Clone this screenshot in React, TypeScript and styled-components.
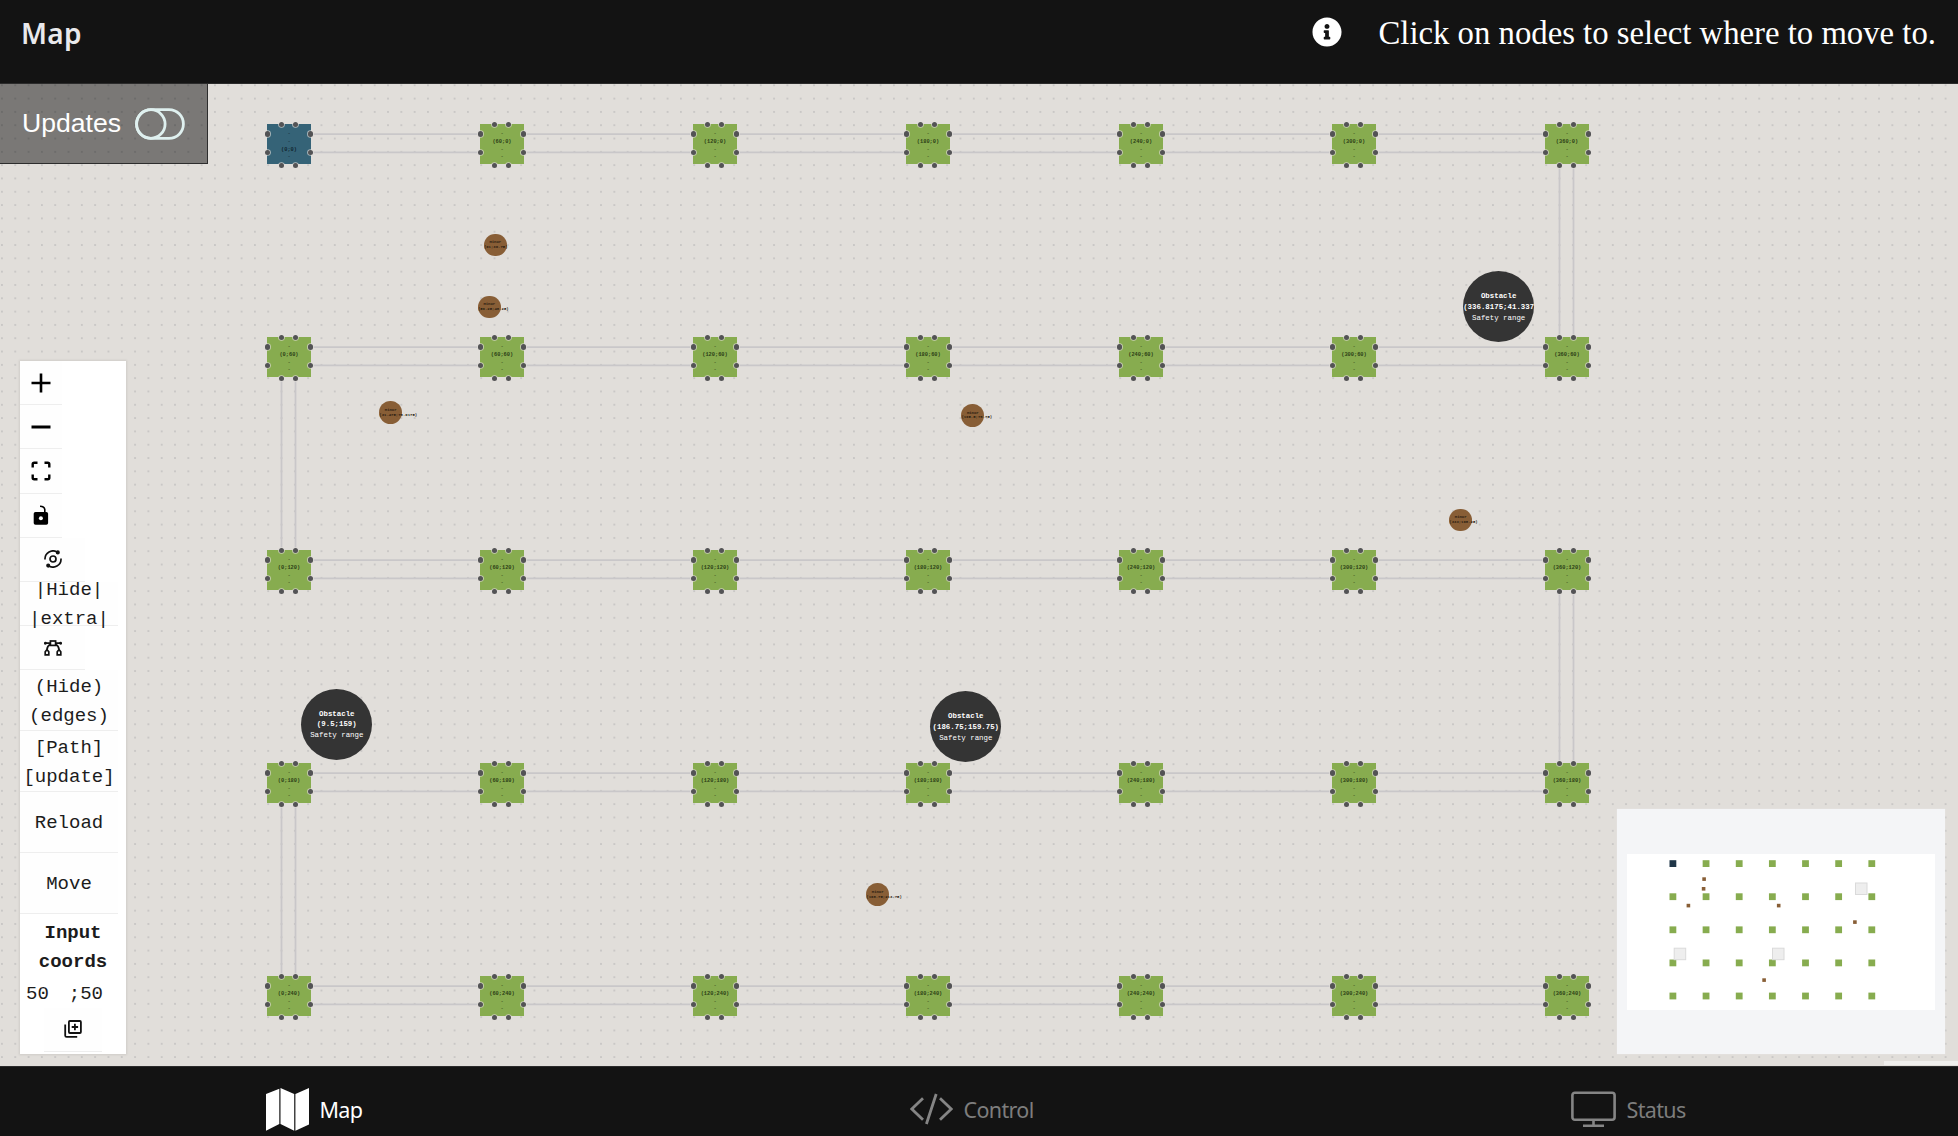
import React from "react";
import styled, { createGlobalStyle } from "styled-components";
import { FaInfoCircle } from "react-icons/fa";

const mono = `"Liberation Mono", monospace`;

const Global = createGlobalStyle`
  *, *::before, *::after { box-sizing: border-box; }
  body { margin: 0; background: #131313; overflow: hidden; }
`;

const Page = styled.div`
  display: flex;
  flex-direction: column;
  width: 100%;
  height: 1136px;
`;

const Header = styled.header`
  display: flex;
  flex: 0 0 84px;
  justify-content: space-between;
  align-items: flex-start;
  padding: 0 22px 0 21px;
  background: #131313;
  border-bottom: 1px solid #2b2b2b;
`;

const Title = styled.h1`
  margin: 13px 0 0;
  font: 600 28px/40px "Noto Sans", sans-serif;
  letter-spacing: 0.3px;
  color: #e9e9ec;
`;

const Hint = styled.div`
  display: flex;
  align-items: center;
  gap: 36px;
  margin-top: 12px;
  font: 32.75px/38px "Liberation Serif", serif;
  color: #fff;
  svg { display: block; }
  span { padding-top: 2px; }
`;

const Canvas = styled.main`
  position: relative;
  display: flex;
  justify-content: space-between;
  align-items: flex-end;
  flex: 1;
  min-height: 0;
  padding: 0 13px 12px 20px;
  overflow: hidden;
  background-color: #e1deda;
`;

const Layer = styled.svg`
  position: absolute;
  inset: 0;
  width: 100%;
  height: 100%;
`;

const Updates = styled.div`
  position: absolute;
  top: 0;
  left: 0;
  display: flex;
  align-items: center;
  gap: 14px;
  width: 208px;
  height: 80px;
  padding-left: 22px;
  font: 26.6px/30px "Liberation Sans", Arial, sans-serif;
  color: #fff;
  background: rgba(0, 0, 0, 0.46);
  border: solid #2d2d2d;
  border-width: 0 1px 1px 0;
  span { padding-bottom: 2px; }
`;

const Node = styled.div<{ $x: number; $y: number; $active: boolean }>`
  position: absolute;
  left: ${(p) => p.$x}px;
  top: ${(p) => p.$y}px;
  display: flex;
  flex-direction: column;
  align-items: center;
  width: 43.2px;
  height: 40px;
  padding-top: 7px;
  background: ${(p) => (p.$active ? "#356377" : "#87ac4f")};
  font: 5.3px/7.7px ${mono};
  color: ${(p) => (p.$active ? "#10262f" : "#2c4016")};
`;

const NodeName = styled.b`
  white-space: nowrap;
`;

const Handle = styled.i<{ $x: number; $y: number }>`
  position: absolute;
  left: ${(p) => p.$x - 2.6}px;
  top: ${(p) => p.$y - 2.6}px;
  width: 5.2px;
  height: 5.2px;
  border-radius: 50%;
  background: #535355;
  box-shadow: 0 0 0 0.8px rgba(225, 222, 218, 0.75);
`;

const Obstacle = styled.div<{ $x: number; $y: number }>`
  position: absolute;
  left: ${(p) => p.$x - 35.5}px;
  top: ${(p) => p.$y - 35.5}px;
  display: flex;
  flex-direction: column;
  justify-content: center;
  align-items: flex-start;
  width: 71px;
  height: 71px;
  padding-top: 1px;
  border-radius: 50%;
  overflow: hidden;
  background: #343434;
  color: #fff;
  font: 7.4px/10.7px ${mono};
  white-space: nowrap;
  > * { min-width: 71px; text-align: center; }
`;

const Rock = styled.div<{ $x: number; $y: number }>`
  position: absolute;
  left: ${(p) => p.$x - 11.4}px;
  top: ${(p) => p.$y - 11.4}px;
  display: flex;
  flex-direction: column;
  justify-content: center;
  width: 22.8px;
  height: 22.8px;
  border-radius: 50%;
  background: #885e36;
  color: #2a1c10;
  font: bold 3.95px/4.5px ${mono};
  white-space: nowrap;
  > :first-child { text-align: center; }
`;

const Controls = styled.aside`
  position: relative;
  display: flex;
  flex-direction: column;
  width: 106px;
  height: 693px;
  background: #fff;
  box-shadow: 0 0 2px 1px rgba(0, 0, 0, 0.08);
  font: 19px/29px ${mono};
  color: #1c1c1c;
`;

const Control = styled.button<{ $w?: number; $h?: number }>`
  display: flex;
  flex: none;
  justify-content: center;
  align-items: center;
  width: ${(p) => p.$w ?? 42}px;
  height: ${(p) => p.$h ?? 44.2}px;
  padding: 0;
  border: 0;
  border-bottom: 1px solid #eee;
  background: #fefefe;
  color: inherit;
  font: inherit;
  white-space: pre;
  span { position: relative; top: 1.5px; }
`;

const Caption = styled.b`
  margin-top: 5px;
  text-align: center;
  white-space: pre;
`;

const Coords = styled.div`
  display: flex;
  gap: 20px;
  padding: 3px 0 0 6px;
`;

const AddButton = styled(Control)`
  align-self: center;
  margin-top: -1px;
`;

const MiniMap = styled.aside`
  position: relative;
  width: 328px;
  height: 245px;
  padding: 45px 10px;
  background: #f4f5f7;
  box-shadow: 0 0 1px #eee;
`;

const MiniView = styled.svg`
  display: block;
  width: 308px;
  height: 156px;
  background: #fff;
`;

const Attribution = styled.div`
  position: absolute;
  right: 0;
  bottom: 1px;
  width: 74px;
  height: 4px;
  background: #efeeec;
`;

const Footer = styled.nav`
  display: grid;
  flex: 0 0 70px;
  grid-template-columns: 644px 661px auto;
  padding: 19px 0 0 266px;
  background: #131313;
  border-top: 1px solid #2b2b2b;
`;

const Tab = styled.a<{ $active?: boolean }>`
  display: flex;
  align-items: center;
  gap: 10.5px;
  height: 46px;
  font: 21.5px/30px "Noto Sans", sans-serif;
  letter-spacing: -0.65px;
  color: ${(p) => (p.$active ? "#fff" : "#7d7d7d")};
  svg { display: block; flex: none; }
  span { padding-top: 2px; }
`;

const PITCH = 213;
const cols = [0, 1, 2, 3, 4, 5, 6];
const rows = [0, 1, 2, 3, 4];
const left = 267.4;
const top = 40.3;

const handles = [
  [14, 0], [28.4, 0], [14, 41], [28.4, 41],
  [0, 9.8], [0, 28.2], [43.4, 9.8], [43.4, 28.2],
];

const obstacles = [
  { x: 1498.7, y: 222.7, at: "(336.8175;41.3375)" },
  { x: 336.8, y: 640.3, at: "(9.5;159)" },
  { x: 965.8, y: 642.8, at: "(186.75;159.75)" },
];

const rocks = [
  { x: 495.3, y: 161, at: "(61;30.75)" },
  { x: 489.3, y: 223, at: "(59.25;48.25)" },
  { x: 390.7, y: 328.7, at: "(31.475;78.0175)" },
  { x: 972.8, y: 331.3, at: "(195.5;78.75)" },
  { x: 1460.7, y: 436, at: "(333;108.25)" },
  { x: 877.7, y: 810.6, at: "(168.75;213.75)" },
];

const miniObstacles = [[234, 34.5], [52.7, 99.7], [151, 99.7]];
const miniRocks = [[77, 25], [76.5, 34.7], [61.3, 51.5], [151.6, 51.5], [227.8, 68], [137, 126]];

const Edges = () => (
  <Layer>
    <defs>
      <pattern id="dots" x="234.95" y="34.55" width="13.3125" height="13.3125" patternUnits="userSpaceOnUse">
        <circle cx="6.65" cy="6.65" r="0.75" fill="#a9a7aa" />
      </pattern>
    </defs>
    <rect width="100%" height="100%" fill="url(#dots)" />
    <g stroke="#c9c7c9" strokeWidth="1.7">
      {rows.map((r) =>
        [9.8, 28.1].map((d) => (
          <line key={`${r}-${d}`} x1={left + 40} x2={left + PITCH * 6} y1={top + r * PITCH + d} y2={top + r * PITCH + d} />
        ))
      )}
      {[0, 1, 2, 3].map((r) =>
        [14.1, 28.1].map((d) => {
          const x = left + (r % 2 ? 0 : PITCH * 6) + d;
          return <line key={`${r}-${d}`} x1={x} x2={x} y1={top + r * PITCH + 40} y2={top + (r + 1) * PITCH} />;
        })
      )}
    </g>
  </Layer>
);

const MapNode = ({ c, r }: { c: number; r: number }) => {
  const active = !c && !r;
  const name = <NodeName>{`(${c * 60};${r * 60})`}</NodeName>;
  return (
    <Node $x={left + c * PITCH} $y={top + r * PITCH} $active={active}>
      <span>-</span>
      {active ? <span>-</span> : name}
      {active ? name : <span>-</span>}
      <span>-</span>
      {handles.map(([x, y], i) => <Handle key={i} $x={x} $y={y} />)}
    </Node>
  );
};

export default function App() {
  return (
    <Page>
      <Global />
      <Header>
        <Title>Map</Title>
        <Hint>
          <FaInfoCircle size={30} />
          <span>Click on nodes to select where to move to.</span>
        </Hint>
      </Header>

      <Canvas>
        <Edges />
        {rows.map((r) => cols.map((c) => <MapNode key={`${c}-${r}`} c={c} r={r} />))}
        {obstacles.map((o) => (
          <Obstacle key={o.at} $x={o.x} $y={o.y}>
            <b>Obstacle</b>
            <b>{o.at}</b>
            <span>Safety range</span>
          </Obstacle>
        ))}
        {rocks.map((o) => (
          <Rock key={o.at} $x={o.x} $y={o.y}>
            <span>Minor</span>
            <span>{o.at}</span>
          </Rock>
        ))}

        <Updates>
          <span>Updates</span>
          <svg width="50" height="32" viewBox="0 0 50 32" fill="none" stroke="#dff0ef" strokeWidth="2.8">
            <rect x="1.6" y="1.6" width="46.8" height="28.8" rx="14.4" />
            <circle cx="15.8" cy="16" r="14.3" />
          </svg>
        </Updates>

        <Controls>
          <Control>
            <svg width="20" height="20" viewBox="0 0 20 20" stroke="#000" strokeWidth="2.6"><path d="M10 .5v19M.5 10h19" /></svg>
          </Control>
          <Control>
            <svg width="20" height="20" viewBox="0 0 20 20" stroke="#000" strokeWidth="3"><path d="M.5 10h19" /></svg>
          </Control>
          <Control>
            <svg width="20" height="20" viewBox="0 0 20 20" fill="none" stroke="#000" strokeWidth="2.4">
              <path d="M1.7 6.5V3.2Q1.7 1.7 3.2 1.7H6.5M13.5 1.7h3.3q1.5 0 1.5 1.5v3.3M18.3 13.5v3.3q0 1.5-1.5 1.5h-3.3M6.5 18.3H3.2q-1.5 0-1.5-1.5v-3.3" />
            </svg>
          </Control>
          <Control>
            <svg width="16" height="20" viewBox="0 0 16 20">
              <rect x="0.7" y="7" width="14.4" height="12.7" rx="1.8" />
              <path d="M11.8 8V4.6Q11.4 1.2 7 1.2" fill="none" stroke="#000" strokeWidth="1.6" />
              <circle cx="7.9" cy="13.2" r="2" fill="#fff" />
            </svg>
          </Control>
          <Control $w={65}>
            <svg width="18" height="18" viewBox="0 0 18 18" fill="none" stroke="#111" strokeWidth="1.7">
              <circle cx="9" cy="9" r="3" />
              <path d="M1 9.5A8 8 0 0 1 13.6 2.4M17 8.5A8 8 0 0 1 4.4 15.6" />
              <circle cx="13.8" cy="2.4" r="1.2" fill="#111" />
              <circle cx="4.2" cy="15.6" r="1.2" fill="#111" />
            </svg>
          </Control>
          <Control $w={98}><span>{"|Hide|\n|extra|"}</span></Control>
          <Control $w={65}>
            <svg width="18" height="16" viewBox="0 0 18 16" fill="none" stroke="#111" strokeWidth="1.7">
              <rect x="6.4" y="1" width="5.2" height="4.4" />
              <path d="M1 3.2h5.4M11.6 3.2H17M6.4 4.4Q3.4 5.6 3 9.5M11.6 4.4Q14.6 5.6 15 9.5" />
              <path d="M1.2 14.8v-3L3 9.6l1.8 2.2v3zM13.2 14.8v-3L15 9.6l1.8 2.2v3z" />
              <circle cx="1.4" cy="3.2" r="0.6" />
              <circle cx="16.6" cy="3.2" r="0.6" />
            </svg>
          </Control>
          <Control $w={98} $h={60.8}><span>{"(Hide)\n(edges)"}</span></Control>
          <Control $w={98} $h={60.8}><span>{"[Path]\n[update]"}</span></Control>
          <Control $w={98} $h={60.8}><span>Reload</span></Control>
          <Control $w={98} $h={60.8}><span>Move</span></Control>
          <Caption>{"Input\ncoords"}</Caption>
          <Coords><span>50</span><span>;50</span></Coords>
          <AddButton $w={58}>
            <svg width="18" height="18" viewBox="0 0 18 18" fill="none" stroke="#111" strokeWidth="1.8">
              <rect x="4.9" y="1" width="12" height="12" rx="1" />
              <path d="M1.2 4.6V15.4Q1.2 16.8 2.6 16.8H13.2M10.9 3.8v6.4M7.7 7h6.4" />
            </svg>
          </AddButton>
        </Controls>

        <MiniMap>
          <MiniView viewBox="0 0 308 156">
            {rows.map((r) =>
              cols.map((c) => (
                <rect
                  key={`${c}-${r}`}
                  x={42.5 + c * 33.15}
                  y={6.2 + r * 33.1}
                  width="6.8"
                  height="6.8"
                  fill={c || r ? "#87ac4f" : "#1f3648"}
                />
              ))
            )}
            {miniObstacles.map(([x, y]) => (
              <rect key={x} x={x - 5.5} y={y - 5.5} width="11.5" height="11.5" fill="#eee" stroke="#dadada" />
            ))}
            {miniRocks.map(([x, y]) => (
              <rect key={x} x={x - 1.7} y={y - 1.7} width="3.6" height="3.6" fill="#885e36" />
            ))}
          </MiniView>
        </MiniMap>
        <Attribution />
      </Canvas>

      <Footer>
        <Tab $active>
          <svg width="43" height="43" viewBox="0 0 43 43" fill="#fff">
            <path d="M0 6 13.3.8V36L0 42.7ZM14.5 0 28.2 6V42.7L14.5 36ZM29.4 6 43 0V36.5L29.4 42.7Z" />
          </svg>
          <span>Map</span>
        </Tab>
        <Tab>
          <svg width="43" height="32" viewBox="0 0 43 32" fill="none" stroke="#858585" strokeWidth="2.8">
            <path d="M13 5.3 1.8 16 13 26.7M30 5.3 41.2 16 30 26.7M26.2 1 16.4 31" />
          </svg>
          <span>Control</span>
        </Tab>
        <Tab>
          <svg width="45" height="37" viewBox="0 0 45 37" fill="none" stroke="#858585" strokeWidth="2.6">
            <rect x="1.4" y="1.8" width="42.2" height="27" rx="2.5" />
            <path d="M22.5 29v5M12 34.7h21" />
          </svg>
          <span>Status</span>
        </Tab>
      </Footer>
    </Page>
  );
}
